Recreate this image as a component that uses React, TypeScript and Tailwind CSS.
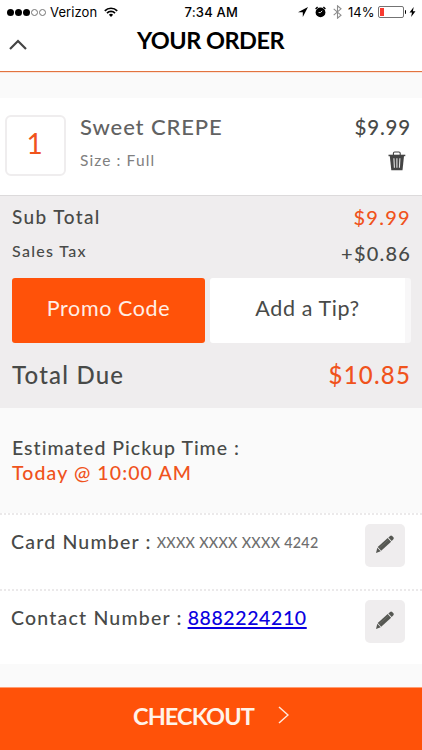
import type { ReactNode } from 'react';

function StatusBar() {
  return (
    <div className="relative flex h-6 items-center justify-between pl-[7px] pr-[6px] font-['Inter'] text-[13px] leading-6 text-black">
      <div className="flex items-center">
        <div className="flex gap-px">
          {[1, 2, 3, 4, 5].map((dot) => (
            <span
              key={dot}
              className={
                dot <= 3
                  ? 'size-[7px] rounded-full bg-black'
                  : 'size-[7px] rounded-full border border-neutral-500'
              }
            />
          ))}
        </div>
        <span className="ml-[4px] tracking-[0.1px]">Verizon</span>
        <svg className="ml-[7px] h-[10px] w-[14px]" viewBox="0 0 14 10" fill="none" stroke="#000" strokeWidth="1.7">
          <path d="M.8 3.8a8.8 8.8 0 0 1 12.4 0" />
          <path d="M3 6.1a5.6 5.6 0 0 1 8 0" />
          <path d="M7 10 4.9 7.8a3 3 0 0 1 4.2 0Z" fill="#000" stroke="none" />
        </svg>
      </div>
      <span className="absolute left-[184.5px] top-0 font-medium tracking-[0.2px]">7:34 AM</span>
      <div className="flex items-center">
        <svg className="h-[10px] w-[10px]" viewBox="0 0 10 10">
          <path d="M10 0 0 5.2h4.8V10Z" />
        </svg>
        <svg className="ml-[7px] h-[12px] w-[11px]" viewBox="0 0 11 12">
          <circle cx="5.5" cy="6.4" r="4.9" />
          <path d="M.6 3 2.6 1.100M10.400 3 8.400 1.100" stroke="#000" strokeWidth="1.4" />
          <path d="M5.5 6.6 7.2 4.800M5.5 6.6H3.6" stroke="#fff" strokeWidth=".9" />
        </svg>
        <svg className="ml-[7px] h-[14px] w-[9px]" viewBox="0 0 9 14" fill="none" stroke="#8c8c8c" strokeWidth="1.1">
          <path d="M.7 3.8 8 10.2 4.5 13.2V.8L8 3.8.7 10.2" />
        </svg>
        <span className="ml-[6px]">14%</span>
        <div className="ml-[3px] h-[12px] w-[26px] rounded-[2px] border border-neutral-500 p-px">
          <div className="h-full w-[4px] bg-[#f83b30]" />
        </div>
        <div className="ml-px h-1 w-[1.5px] rounded-r bg-black" />
        <svg className="ml-[3px] h-[10px] w-[7px]" viewBox="0 0 6 10">
          <path d="M4.2 0 0 5.600h2.500L1.600 10 6 4.200H3.400Z" />
        </svg>
      </div>
    </div>
  );
}

function TrashIcon() {
  return (
    <svg className="h-5 w-[18px]" viewBox="0 0 18 20">
      <path d="M5.400 4V2.300Q5.400 1 6.700 1h4.200q1.300 0 1.300 1.300V4" fill="none" stroke="#444" strokeWidth="1.1" />
      <path d="M.5 3.700h16.800v1.500H.5Z" fill="#444" />
      <path d="M1.800 5h14.200l-1.500 14.300H3.300Z" fill="#444" />
      <path d="m5.900 7.200.5 9.600M8.900 7.200v9.600m3-9.600-.5 9.600" stroke="#e5e5e5" strokeWidth="1.1" />
    </svg>
  );
}

function EditButton() {
  return (
    <button className="flex h-[43px] w-10 items-center justify-center rounded-[5px] bg-[#efedee]">
      <svg className="-mt-[3px] h-[18px] w-[18px]" viewBox="0 0 18 18" fill="#555752">
        <path d="M0 18l1.300-5.200L4.700 16.300Z" />
        <path d="M1.700 12 11.700 3l3.400 3.800-9.900 9Z" />
        <path d="m12.400 2.400 1.700-1.500q1-.8 2 0l1.300 1.400q.8 1-.1 2L15.700 6Z" />
        <path d="m3.400 13 9.200-8.400" stroke="#85857f" strokeWidth=".4" />
      </svg>
    </button>
  );
}

function DetailRow({ className, children }: { className: string; children: ReactNode }) {
  return (
    <div className={`flex justify-between border-t-2 border-dotted border-[#ebe9ea] bg-white pl-[11px] pr-[17px] pt-[9px] ${className}`}>
      {children}
      <EditButton />
    </div>
  );
}

export default function App() {
  return (
    <div className="flex h-[750px] w-[422px] flex-col overflow-hidden whitespace-nowrap bg-[#fafafa] font-['Lato',sans-serif] text-[#484a48]">
      <header className="relative h-[71px] shrink-0 bg-white">
        <StatusBar />
        <svg className="absolute left-[9px] top-[39px] h-[11px] w-[18px]" viewBox="0 0 18 11" fill="none" stroke="#444" strokeWidth="2.200">
          <path d="M1 10 9 2l8 8" />
        </svg>
        <h1 className="pr-[1px] text-center text-[23.500px] font-bold leading-8 tracking-[-0.5px] text-black">YOUR ORDER</h1>
      </header>
      <div className="h-px shrink-0 bg-[#e2733f]" />
      <div className="h-px shrink-0 bg-[#fbe3d8]" />

      <section className="mt-[25px] flex h-[97px] shrink-0 bg-white pl-[5px] pr-[11px] pt-[17px]">
        <div className="flex h-[61px] w-[61px] items-center justify-center rounded-[6px] border-2 border-[#efedee] pb-[6px] pr-[2px] text-[28px] text-[#f0531c]">
          1
        </div>
        <div className="ml-[14px] flex-1">
          <div className="text-[22px] font-medium leading-6 tracking-[0.900px] text-[#626262]">Sweet CREPE</div>
          <div className="mt-[11px] text-[15.500px] leading-5 tracking-[1.100px] text-[#808080]">Size : Full</div>
        </div>
        <div className="flex flex-col items-end">
          <div className="text-[20.500px] font-medium leading-6 tracking-[0.800px]">$9.99</div>
          <button className="mr-[5px] mt-[12px]">
            <TrashIcon />
          </button>
        </div>
      </section>

      <section className="h-[213px] shrink-0 border-t border-[#dcdadb] bg-[#efedee] pl-[12px] pr-[11px]">
        <div className="mt-[10px] flex h-6 items-center justify-between">
          <span className="-mt-px text-[19px] font-medium tracking-[1.400px]">Sub Total</span>
          <span className="-mt-[2px] text-[20px] font-medium tracking-[1.300px] text-[#f0531c]">$9.99</span>
        </div>
        <div className="mt-[10px] flex h-6 items-center justify-between">
          <span className="-mt-[3px] text-[16px] font-medium tracking-[1.300px]">Sales Tax</span>
          <span className="mt-[2px] text-[20px] font-medium tracking-[1.200px]">+$0.86</span>
        </div>
        <div className="mt-[14px] flex h-[65px] text-[21.500px]">
          <button className="w-[193px] rounded-[3px] bg-[#ff5209] pb-1 tracking-[0.600px] text-[#ffeee5]">Promo Code</button>
          <button className="ml-[5px] flex-1 rounded-[3px] border-r-[6px] border-[#f8f7f8] bg-white pb-1 tracking-[0.600px]">Add a Tip?</button>
        </div>
        <div className="mt-[16px] flex h-8 items-center justify-between text-[24px] font-medium">
          <span className="tracking-[1.200px]">Total Due</span>
          <span className="tracking-[1.200px] text-[#f0531c]">$10.85</span>
        </div>
      </section>

      <section className="h-[105px] shrink-0 pl-[12px] pt-[27px] text-[19.500px] font-medium leading-[25px]">
        <div className="tracking-[1px]">Estimated Pickup Time :</div>
        <div className="tracking-[1.100px] text-[#f0531c]">Today @ 10:00 AM</div>
      </section>

      <DetailRow className="h-[76px]">
        <div className="flex h-[35px] items-center text-[19.500px] font-medium tracking-[1.200px]">
          Card Number :<span className="ml-[5px] mt-[3px] text-[14.300px] tracking-[0.300px] text-[#6e6e6e]">XXXX XXXX XXXX 4242</span>
        </div>
      </DetailRow>
      <DetailRow className="h-[75px]">
        <div className="flex h-[35px] items-center text-[19.500px] font-medium tracking-[1.200px]">
          Contact Number :
          <a className="ml-[5px] tracking-[0.600px] text-[#0a00e0] underline decoration-2 underline-offset-2" href="tel:8882224210">
            8882224210
          </a>
        </div>
      </DetailRow>

      <button className="mt-auto flex h-[63px] shrink-0 items-center border-t border-[#ff9d73] bg-[#ff5209] pb-[5px] pl-[133px] text-[23.500px] font-bold tracking-[-0.900px] text-[#fff3ea]">
        CHECKOUT
        <svg className="mb-[3px] ml-[24px] h-[18px] w-[11px]" viewBox="0 0 11 18" fill="none" stroke="#ffeadf" strokeWidth="1.500">
          <path d="m1 1 9 8-9 8" />
        </svg>
      </button>
    </div>
  );
}
